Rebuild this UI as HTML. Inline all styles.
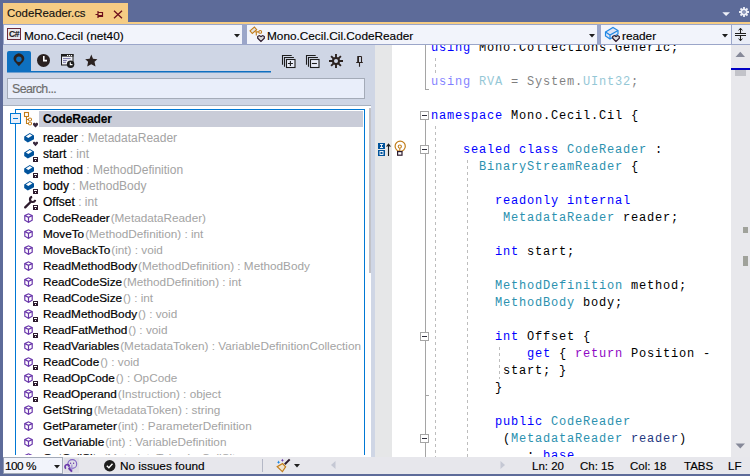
<!DOCTYPE html>
<html><head><meta charset="utf-8"><style>
*{margin:0;padding:0;box-sizing:border-box}
html,body{width:750px;height:476px;overflow:hidden;background:#5d6b99;font-family:"Liberation Sans",sans-serif}
.a{position:absolute}
svg{position:absolute;overflow:visible}
.code{position:absolute;left:431px;font-family:"Liberation Mono",monospace;font-size:12px;letter-spacing:0.8px;line-height:17px;white-space:pre;color:#000;height:17px}
.k{color:#0000ff}.t{color:#2b91af}.c{color:#8f08c4}.p{color:#1f377f}
.row{position:absolute;left:43px;height:16px;font-size:12px;white-space:pre;color:#000;-webkit-text-stroke:0.2px #000;line-height:16px}
.g{color:#a3a3a3;-webkit-text-stroke:0}
.fd{opacity:.5}
.txt{position:absolute;font-size:12px;white-space:pre;color:#000;line-height:14px;-webkit-text-stroke:0.15px currentColor}
.dash{position:absolute;width:1px;background:repeating-linear-gradient(to bottom,#bdbdbd 0 3px,transparent 3px 6px)}
.obox{position:absolute;left:420px;width:9px;height:9px;border:1px solid #a5a5a5;background:#fff}
.obox:after{content:"";position:absolute;left:1px;top:3px;width:5px;height:1px;background:#2d2d3a}
.oline{position:absolute;left:425px;width:1px;background:#a5a5a5}
</style></head><body>
<div class="a" style="left:3px;top:3px;width:125px;height:21px;background:#f5cc84"></div>
<div class="a" style="left:3px;top:22px;width:747px;height:2px;background:#f5cc84"></div>
<div class="txt" style="left:7px;top:6px;font-size:11.4px;color:#111">CodeReader.cs</div>
<svg style="left:95px;top:10px" width="9" height="9"><path d="M0.5 4.5 H3 M3 1 V8 M3 2.5 H7.5 V6.5 H3" stroke="#6d0f1b" stroke-width="1.2" fill="none"/><rect x="3" y="5" width="4.5" height="1.6" fill="#6d0f1b"/></svg>
<svg style="left:113px;top:10px" width="10" height="9"><path d="M1 0.8 L9 8.2 M9 0.8 L1 8.2" stroke="#6d0f1b" stroke-width="1.3"/></svg>
<svg style="left:722px;top:12px" width="9" height="5"><path d="M0.3 0.3 H8 L4.1 4 Z" fill="#eef0f8"/></svg>
<svg style="left:739px;top:7px" width="11" height="11"><g stroke="#eef0f8" stroke-width="1.8"><path d="M5 0 V10 M0 5 H10 M1.5 1.5 L8.5 8.5 M8.5 1.5 L1.5 8.5"/></g><circle cx="5" cy="5" r="3.5" fill="#eef0f8"/><circle cx="5" cy="5" r="1.8" fill="#5d6b99"/><circle cx="5" cy="5" r="0.8" fill="#cdd2e6"/></svg>
<div class="a" style="left:3px;top:24px;width:747px;height:21px;background:#9ba6c9"></div>
<div class="a" style="left:4px;top:25px;width:238px;height:19px;background:#f2f4fb"></div>
<div class="txt" style="left:24px;top:29px;font-size:11.8px">Mono.Cecil (net40)</div>
<svg style="left:234px;top:34px" width="7" height="4"><path d="M0 0 H6 L3 3.5 Z" fill="#1e1e1e"/></svg>
<div class="a" style="left:247px;top:25px;width:350px;height:19px;background:#f2f4fb"></div>
<div class="txt" style="left:267px;top:29px;font-size:11.8px">Mono.Cecil.Cil.CodeReader</div>
<svg style="left:589px;top:34px" width="7" height="4"><path d="M0 0 H6 L3 3.5 Z" fill="#1e1e1e"/></svg>
<div class="a" style="left:601px;top:25px;width:130px;height:19px;background:#f2f4fb"></div>
<div class="txt" style="left:622px;top:29px;font-size:11.8px">reader</div>
<svg style="left:722px;top:34px" width="7" height="4"><path d="M0 0 H6 L3 3.5 Z" fill="#1e1e1e"/></svg>
<div class="a" style="left:7px;top:28px;width:14px;height:12px;border:1px solid #6d2a3a;background:#e8e8ec"></div>
<div class="txt" style="left:9px;top:28px;font-size:8.5px;font-weight:bold;color:#1e1e1e;line-height:12px;letter-spacing:-0.3px">C#</div>
<svg style="left:249px;top:26px" width="18" height="17"><g fill="none" stroke="#c27d1a" stroke-width="1.1"><path d="M1 4.9 L5.4 1 L7.7 3.6 L3.3 7.5 Z" fill="#e2e2e2"/><path d="M6.3 5.9 H9.8 M7.3 5.4 V9.6"/><circle cx="11.2" cy="5.9" r="1.4"/></g><path d="M12 15.5 L8.7 12.3 V10.6 L10.2 9.6 L12 10.6 L13.8 9.6 L15.3 10.6 V12.3 Z" fill="#dedede" stroke="#2d1b2e" stroke-width="1.2"/></svg>
<svg style="left:604px;top:26px" width="18" height="17"><path d="M1.5 6 L9 1.5 L14 4.5 V8 L6 13 L1.5 10 Z" fill="#dde3f5" stroke="#1e88e5" stroke-width="1.2"/><path d="M1.5 6 L6 9 L14 4.5 M6 9 V13" fill="none" stroke="#1e88e5" stroke-width="1.2"/><path d="M12 15.5 L8.7 12.3 V10.6 L10.2 9.6 L12 10.6 L13.8 9.6 L15.3 10.6 V12.3 Z" fill="#dedede" stroke="#2d1b2e" stroke-width="1.2"/></svg>
<div class="a" style="left:732px;top:25px;width:18px;height:19px;background:#e9edf7"></div>
<svg style="left:734px;top:27px" width="14" height="16"><path d="M1 6.5 H12 M1 8.5 H12 M6.5 1.5 V6.5 M6.5 8.5 V13.5" stroke="#1e1e1e" stroke-width="1.1"/><path d="M4.6 3.4 L6.5 1.2 L8.4 3.4 M4.6 11.6 L6.5 13.8 L8.4 11.6" stroke="#1e1e1e" stroke-width="1" fill="none"/></svg>
<div class="a" style="left:3px;top:45px;width:372px;height:412px;background:#cfd6e5"></div>
<div class="a" style="left:7px;top:51px;width:24px;height:21px;background:#0e70c0;border-radius:2px 2px 0 0"></div>
<div class="a" style="left:7px;top:71px;width:264px;height:1px;background:#0e70c0"></div>
<div class="a" style="left:7px;top:72px;width:264px;height:1px;background:#6e9fd0"></div>
<svg style="left:13px;top:54px" width="12" height="13"><path d="M5.9 12.2 L1.6 7.6 A5.2 5.2 0 1 1 10.2 7.6 Z" fill="#2b2220"/><circle cx="5.9" cy="5.2" r="2.7" fill="#0e70c0"/></svg>
<svg style="left:37px;top:54px" width="14" height="14"><circle cx="6.5" cy="6.4" r="6.5" fill="#2b2220"/><path d="M6.8 1.9 V6.6 H10" stroke="#fff" stroke-width="1.6" fill="none"/></svg>
<svg style="left:61px;top:54px" width="15" height="15"><rect x="0.5" y="0.5" width="11.5" height="10.5" fill="#eef0f6" stroke="#1e1e1e"/><rect x="0" y="0" width="12.5" height="2.6" fill="#1e1e1e"/><rect x="6" y="1" width="1.2" height="1" fill="#fff"/><rect x="7.9" y="1" width="1.2" height="1" fill="#fff"/><rect x="9.9" y="1" width="1.2" height="1" fill="#fff"/><path d="M2 4.6 H9.6 M2 6.5 H5.8 M2 8.3 H5" stroke="#7a78a8" stroke-width="1"/><circle cx="9.6" cy="10.2" r="3.7" fill="#1e1e1e"/><path d="M9.3 8.2 V10.6 H11.5" stroke="#fff" stroke-width="1.1" fill="none"/></svg>
<svg style="left:84px;top:54px" width="14" height="13"><path d="M7.3 0.4 L9 4.8 L13.4 5.2 L10.5 7.8 L11.5 12.5 L7.3 10.2 L3.2 12.5 L4.1 7.8 L1.2 5.2 L5.6 4.8 Z" fill="#2b2220"/></svg>
<svg style="left:281px;top:54px" width="15" height="15"><path d="M1.5 10.8 V1.5 H10.7 M3.5 12.7 V3.5 H12.9" stroke="#1e1e1e" stroke-width="1.1" fill="none"/><rect x="5.5" y="5.5" width="8.5" height="8" fill="#e8ecf7" stroke="#1e1e1e" stroke-width="1.1"/><path d="M9.4 7 V12 M6.9 9.5 H11.9" stroke="#1e1e1e" stroke-width="1.1"/></svg>
<svg style="left:305px;top:54px" width="15" height="15"><path d="M1.5 10.8 V1.5 H10.7 M3.5 12.7 V3.5 H12.9" stroke="#1e1e1e" stroke-width="1.1" fill="none"/><rect x="5.5" y="5.5" width="8.5" height="8" fill="#e8ecf7" stroke="#1e1e1e" stroke-width="1.1"/><path d="M6.9 9.5 H11.9" stroke="#1e1e1e" stroke-width="1.1"/></svg>
<svg style="left:329px;top:54px" width="14" height="14"><g stroke="#2b2220" stroke-width="1.9"><path d="M7 0 V14 M0 7 H14 M2.1 2.1 L11.9 11.9 M11.9 2.1 L2.1 11.9"/></g><circle cx="7" cy="7" r="4" fill="#2b2220"/><circle cx="7" cy="7" r="2" fill="#cfd6e5"/></svg>
<svg style="left:356px;top:56px" width="8" height="11"><path d="M1.5 0.5 H5.5 M5.5 0.5 V6.5 M0.2 6.5 H6.8 M3.5 6.5 V10.8" stroke="#2b2220" stroke-width="1.1" fill="none"/><rect x="1.2" y="0.5" width="1.8" height="6" fill="#2b2220"/></svg>
<div class="a" style="left:7px;top:78px;width:358px;height:21px;background:#e9eefa;border:1px solid #a4abb8"></div>
<div class="txt" style="left:12px;top:82px;font-size:12.4px;letter-spacing:-0.6px;color:#6d6d6d">Search...</div>
<div class="a" style="left:3px;top:105px;width:368px;height:352px;background:#fff;border-top:1px solid #a9b1bf"></div>
<div class="a" style="left:39px;top:111px;width:324px;height:16px;background:#c9ccd8"></div>
<div class="a" style="left:15px;top:109px;width:350px;height:346px;border:1px solid #0078d4;border-bottom:none"></div>
<div class="a" style="left:369px;top:108px;width:2px;height:165px;background:#c2c3c9"></div>
<div class="a" style="left:10px;top:113px;width:11px;height:11px;background:#e9f0fb;border:1px solid #0078d4"></div>
<div class="a" style="left:13px;top:118px;width:5px;height:1px;background:#0078d4"></div>
<svg style="left:23px;top:111px" width="16" height="17"><g fill="none" stroke="#c27d1a" stroke-width="1.1"><rect x="1.5" y="1.5" width="4" height="4"/><path d="M3.5 5.5 V12.5 H5.5 M3.5 8.5 H5.5"/></g><g fill="none" stroke="#c27d1a" stroke-width="1"><rect x="5.5" y="7.2" width="3" height="2.6" rx="0.6"/><rect x="5.5" y="11.2" width="3" height="2.6" rx="0.6"/></g><path d="M12.5 16.5 L10 14 V12.4 L11.2 11.6 L12.5 12.4 L13.8 11.6 L15 12.4 V14 Z" fill="#3a2a3e"/></svg>
<div class="row" style="top:111px;font-weight:bold;-webkit-text-stroke:0.1px #000;letter-spacing:-0.2px">CodeReader</div>
<div class="a" style="left:0;top:0;width:371px;height:455px;overflow:hidden">
<div class="row" style="top:130px;font-size:12px">reader<span class="g" style="margin-left:0px"> : MetadataReader</span></div>
<svg style="left:24px;top:133px" width="16" height="15"><path d="M0.2 3.4 L5.8 0 L10 2.4 L10 6.2 L3.8 9.4 L0.2 7 Z" fill="#00539c"/><path d="M1.9 3.6 L5.8 1.1 L8.3 2.6 L4.3 5 Z" fill="#fff"/><path d="M11.5 13.2 L9 10.6 V9.3 L10.1 8.5 L11.5 9.4 L12.9 8.5 L14 9.3 V10.6 Z" fill="#3a2a3e"/></svg>
<div class="row" style="top:146px;font-size:12px">start<span class="g" style="margin-left:0px"> : int</span></div>
<svg style="left:24px;top:149px" width="16" height="15"><path d="M0.2 3.4 L5.8 0 L10 2.4 L10 6.2 L3.8 9.4 L0.2 7 Z" fill="#00539c"/><path d="M1.9 3.6 L5.8 1.1 L8.3 2.6 L4.3 5 Z" fill="#fff"/><rect x="9" y="8" width="5" height="5" fill="#2d1b2e"/><rect x="10" y="9" width="3" height="1" fill="#fff"/><rect x="11" y="11" width="1" height="1" fill="#fff"/></svg>
<div class="row" style="top:162px;font-size:12px">method<span class="g" style="margin-left:0px"> : MethodDefinition</span></div>
<svg style="left:24px;top:165px" width="16" height="15"><path d="M0.2 3.4 L5.8 0 L10 2.4 L10 6.2 L3.8 9.4 L0.2 7 Z" fill="#00539c"/><path d="M1.9 3.6 L5.8 1.1 L8.3 2.6 L4.3 5 Z" fill="#fff"/><rect x="9" y="8" width="5" height="5" fill="#2d1b2e"/><rect x="10" y="9" width="3" height="1" fill="#fff"/><rect x="11" y="11" width="1" height="1" fill="#fff"/></svg>
<div class="row" style="top:178px;font-size:12px">body<span class="g" style="margin-left:0px"> : MethodBody</span></div>
<svg style="left:24px;top:181px" width="16" height="15"><path d="M0.2 3.4 L5.8 0 L10 2.4 L10 6.2 L3.8 9.4 L0.2 7 Z" fill="#00539c"/><path d="M1.9 3.6 L5.8 1.1 L8.3 2.6 L4.3 5 Z" fill="#fff"/><rect x="9" y="8" width="5" height="5" fill="#2d1b2e"/><rect x="10" y="9" width="3" height="1" fill="#fff"/><rect x="11" y="11" width="1" height="1" fill="#fff"/></svg>
<div class="row" style="top:194px;font-size:12px">Offset<span class="g" style="margin-left:0px"> : int</span></div>
<svg style="left:24px;top:197px" width="16" height="15"><path d="M1.2 10.4 L6.6 5" stroke="#2d1b2e" stroke-width="2.3" stroke-linecap="round"/><path d="M8.15 -0.16 A2.6 2.6 0 1 0 11.16 2.85" stroke="#2d1b2e" stroke-width="2.2" fill="none"/><rect x="9" y="8" width="5" height="5" fill="#2d1b2e"/><rect x="10" y="9" width="3" height="1" fill="#fff"/><rect x="11" y="11" width="1" height="1" fill="#fff"/></svg>
<div class="row" style="top:210px;font-size:11.75px">CodeReader<span class="g" style="margin-left:1px">(MetadataReader)</span></div>
<svg style="left:24px;top:213px" width="16" height="15"><g fill="none" stroke="#6936aa" stroke-width="1.2"><path d="M0.8 2.6 L4.5 0.8 L8.2 2.6 L8.2 7.2 L4.5 9.2 L0.8 7.2 Z"/><path d="M0.8 2.6 L4.5 4.4 L8.2 2.6 M4.5 4.4 L4.5 9.2"/></g></svg>
<div class="row" style="top:226px;font-size:11.75px">MoveTo<span class="g" style="margin-left:1px">(MethodDefinition) : int</span></div>
<svg style="left:24px;top:229px" width="16" height="15"><g fill="none" stroke="#6936aa" stroke-width="1.2"><path d="M0.8 2.6 L4.5 0.8 L8.2 2.6 L8.2 7.2 L4.5 9.2 L0.8 7.2 Z"/><path d="M0.8 2.6 L4.5 4.4 L8.2 2.6 M4.5 4.4 L4.5 9.2"/></g></svg>
<div class="row" style="top:242px;font-size:11.75px">MoveBackTo<span class="g" style="margin-left:1px">(int) : void</span></div>
<svg style="left:24px;top:245px" width="16" height="15"><g fill="none" stroke="#6936aa" stroke-width="1.2"><path d="M0.8 2.6 L4.5 0.8 L8.2 2.6 L8.2 7.2 L4.5 9.2 L0.8 7.2 Z"/><path d="M0.8 2.6 L4.5 4.4 L8.2 2.6 M4.5 4.4 L4.5 9.2"/></g></svg>
<div class="row" style="top:258px;font-size:11.75px">ReadMethodBody<span class="g" style="margin-left:1px">(MethodDefinition) : MethodBody</span></div>
<svg style="left:24px;top:261px" width="16" height="15"><g fill="none" stroke="#6936aa" stroke-width="1.2"><path d="M0.8 2.6 L4.5 0.8 L8.2 2.6 L8.2 7.2 L4.5 9.2 L0.8 7.2 Z"/><path d="M0.8 2.6 L4.5 4.4 L8.2 2.6 M4.5 4.4 L4.5 9.2"/></g></svg>
<div class="row" style="top:274px;font-size:11.75px">ReadCodeSize<span class="g" style="margin-left:1px">(MethodDefinition) : int</span></div>
<svg style="left:24px;top:277px" width="16" height="15"><g fill="none" stroke="#6936aa" stroke-width="1.2"><path d="M0.8 2.6 L4.5 0.8 L8.2 2.6 L8.2 7.2 L4.5 9.2 L0.8 7.2 Z"/><path d="M0.8 2.6 L4.5 4.4 L8.2 2.6 M4.5 4.4 L4.5 9.2"/></g></svg>
<div class="row" style="top:290px;font-size:11.75px">ReadCodeSize<span class="g" style="margin-left:1px">() : int</span></div>
<svg style="left:24px;top:293px" width="16" height="15"><g fill="none" stroke="#6936aa" stroke-width="1.2"><path d="M0.8 2.6 L4.5 0.8 L8.2 2.6 L8.2 7.2 L4.5 9.2 L0.8 7.2 Z"/><path d="M0.8 2.6 L4.5 4.4 L8.2 2.6 M4.5 4.4 L4.5 9.2"/></g><rect x="9" y="8" width="5" height="5" fill="#2d1b2e"/><rect x="10" y="9" width="3" height="1" fill="#fff"/><rect x="11" y="11" width="1" height="1" fill="#fff"/></svg>
<div class="row" style="top:306px;font-size:11.75px">ReadMethodBody<span class="g" style="margin-left:1px">() : void</span></div>
<svg style="left:24px;top:309px" width="16" height="15"><g fill="none" stroke="#6936aa" stroke-width="1.2"><path d="M0.8 2.6 L4.5 0.8 L8.2 2.6 L8.2 7.2 L4.5 9.2 L0.8 7.2 Z"/><path d="M0.8 2.6 L4.5 4.4 L8.2 2.6 M4.5 4.4 L4.5 9.2"/></g><rect x="9" y="8" width="5" height="5" fill="#2d1b2e"/><rect x="10" y="9" width="3" height="1" fill="#fff"/><rect x="11" y="11" width="1" height="1" fill="#fff"/></svg>
<div class="row" style="top:322px;font-size:11.75px">ReadFatMethod<span class="g" style="margin-left:1px">() : void</span></div>
<svg style="left:24px;top:325px" width="16" height="15"><g fill="none" stroke="#6936aa" stroke-width="1.2"><path d="M0.8 2.6 L4.5 0.8 L8.2 2.6 L8.2 7.2 L4.5 9.2 L0.8 7.2 Z"/><path d="M0.8 2.6 L4.5 4.4 L8.2 2.6 M4.5 4.4 L4.5 9.2"/></g><rect x="9" y="8" width="5" height="5" fill="#2d1b2e"/><rect x="10" y="9" width="3" height="1" fill="#fff"/><rect x="11" y="11" width="1" height="1" fill="#fff"/></svg>
<div class="row" style="top:338px;font-size:11.75px">ReadVariables<span class="g" style="margin-left:1px">(MetadataToken) : VariableDefinitionCollection</span></div>
<svg style="left:24px;top:341px" width="16" height="15"><g fill="none" stroke="#6936aa" stroke-width="1.2"><path d="M0.8 2.6 L4.5 0.8 L8.2 2.6 L8.2 7.2 L4.5 9.2 L0.8 7.2 Z"/><path d="M0.8 2.6 L4.5 4.4 L8.2 2.6 M4.5 4.4 L4.5 9.2"/></g></svg>
<div class="row" style="top:354px;font-size:11.75px">ReadCode<span class="g" style="margin-left:1px">() : void</span></div>
<svg style="left:24px;top:357px" width="16" height="15"><g fill="none" stroke="#6936aa" stroke-width="1.2"><path d="M0.8 2.6 L4.5 0.8 L8.2 2.6 L8.2 7.2 L4.5 9.2 L0.8 7.2 Z"/><path d="M0.8 2.6 L4.5 4.4 L8.2 2.6 M4.5 4.4 L4.5 9.2"/></g><rect x="9" y="8" width="5" height="5" fill="#2d1b2e"/><rect x="10" y="9" width="3" height="1" fill="#fff"/><rect x="11" y="11" width="1" height="1" fill="#fff"/></svg>
<div class="row" style="top:370px;font-size:11.75px">ReadOpCode<span class="g" style="margin-left:1px">() : OpCode</span></div>
<svg style="left:24px;top:373px" width="16" height="15"><g fill="none" stroke="#6936aa" stroke-width="1.2"><path d="M0.8 2.6 L4.5 0.8 L8.2 2.6 L8.2 7.2 L4.5 9.2 L0.8 7.2 Z"/><path d="M0.8 2.6 L4.5 4.4 L8.2 2.6 M4.5 4.4 L4.5 9.2"/></g><rect x="9" y="8" width="5" height="5" fill="#2d1b2e"/><rect x="10" y="9" width="3" height="1" fill="#fff"/><rect x="11" y="11" width="1" height="1" fill="#fff"/></svg>
<div class="row" style="top:386px;font-size:11.75px">ReadOperand<span class="g" style="margin-left:1px">(Instruction) : object</span></div>
<svg style="left:24px;top:389px" width="16" height="15"><g fill="none" stroke="#6936aa" stroke-width="1.2"><path d="M0.8 2.6 L4.5 0.8 L8.2 2.6 L8.2 7.2 L4.5 9.2 L0.8 7.2 Z"/><path d="M0.8 2.6 L4.5 4.4 L8.2 2.6 M4.5 4.4 L4.5 9.2"/></g><rect x="9" y="8" width="5" height="5" fill="#2d1b2e"/><rect x="10" y="9" width="3" height="1" fill="#fff"/><rect x="11" y="11" width="1" height="1" fill="#fff"/></svg>
<div class="row" style="top:402px;font-size:11.75px">GetString<span class="g" style="margin-left:1px">(MetadataToken) : string</span></div>
<svg style="left:24px;top:405px" width="16" height="15"><g fill="none" stroke="#6936aa" stroke-width="1.2"><path d="M0.8 2.6 L4.5 0.8 L8.2 2.6 L8.2 7.2 L4.5 9.2 L0.8 7.2 Z"/><path d="M0.8 2.6 L4.5 4.4 L8.2 2.6 M4.5 4.4 L4.5 9.2"/></g></svg>
<div class="row" style="top:418px;font-size:11.75px">GetParameter<span class="g" style="margin-left:1px">(int) : ParameterDefinition</span></div>
<svg style="left:24px;top:421px" width="16" height="15"><g fill="none" stroke="#6936aa" stroke-width="1.2"><path d="M0.8 2.6 L4.5 0.8 L8.2 2.6 L8.2 7.2 L4.5 9.2 L0.8 7.2 Z"/><path d="M0.8 2.6 L4.5 4.4 L8.2 2.6 M4.5 4.4 L4.5 9.2"/></g></svg>
<div class="row" style="top:434px;font-size:11.75px">GetVariable<span class="g" style="margin-left:1px">(int) : VariableDefinition</span></div>
<svg style="left:24px;top:437px" width="16" height="15"><g fill="none" stroke="#6936aa" stroke-width="1.2"><path d="M0.8 2.6 L4.5 0.8 L8.2 2.6 L8.2 7.2 L4.5 9.2 L0.8 7.2 Z"/><path d="M0.8 2.6 L4.5 4.4 L8.2 2.6 M4.5 4.4 L4.5 9.2"/></g></svg>
<div class="row" style="top:450px;font-size:11.75px">GetCallSite<span class="g" style="margin-left:1px">(MetadataToken) : CallSite</span></div>
<svg style="left:24px;top:453px" width="16" height="15"><g fill="none" stroke="#6936aa" stroke-width="1.2"><path d="M0.8 2.6 L4.5 0.8 L8.2 2.6 L8.2 7.2 L4.5 9.2 L0.8 7.2 Z"/><path d="M0.8 2.6 L4.5 4.4 L8.2 2.6 M4.5 4.4 L4.5 9.2"/></g></svg>
</div>
<div class="a" style="left:375px;top:45px;width:17px;height:412px;background:#e6e7e8"></div>
<div class="a" style="left:392px;top:45px;width:339px;height:412px;background:#fff;overflow:hidden"><div class="a" style="left:-392px;top:-45px;width:750px;height:476px">
<div class="code" style="top:40px"><span class="k">using</span> Mono.Collections.Generic;</div>
<div class="code fd" style="top:74px"><span class="k">using</span> <span class="t">RVA</span> = System.<span class="t">UInt32</span>;</div>
<div class="code" style="top:108px"><span class="k">namespace</span> Mono.Cecil.Cil {</div>
<div class="code" style="top:142px">    <span class="k">sealed</span> <span class="k">class</span> <span class="t">CodeReader</span> :</div>
<div class="code" style="top:159px">      <span class="t">BinaryStreamReader</span> {</div>
<div class="code" style="top:193px">        <span class="k">readonly</span> <span class="k">internal</span></div>
<div class="code" style="top:210px">         <span class="t">MetadataReader</span> reader;</div>
<div class="code" style="top:244px">        <span class="k">int</span> start;</div>
<div class="code" style="top:278px">        <span class="t">MethodDefinition</span> method;</div>
<div class="code" style="top:295px">        <span class="t">MethodBody</span> body;</div>
<div class="code" style="top:329px">        <span class="k">int</span> Offset {</div>
<div class="code" style="top:346px">            <span class="k">get</span> { <span class="c">return</span> Position -</div>
<div class="code" style="top:363px">         start; }</div>
<div class="code" style="top:380px">        }</div>
<div class="code" style="top:414px">        <span class="k">public</span> <span class="t">CodeReader</span></div>
<div class="code" style="top:431px">         (<span class="t">MetadataReader</span> <span class="p">reader</span>)</div>
<div class="code" style="top:448px">            : <span class="k">base</span></div>
<div class="dash" style="left:435px;top:58px;height:15px"></div>
<div class="dash" style="left:435px;top:126px;height:331px"></div>
<div class="dash" style="left:467px;top:160px;height:297px"></div>
<div class="dash" style="left:499px;top:347px;height:32px"></div>
<div class="oline" style="top:45px;height:45px"></div><div class="a" style="left:425px;top:89px;width:4px;height:1px;background:#a5a5a5"></div>
<div class="obox" style="top:111px"></div>
<div class="obox" style="top:145px"></div>
<div class="obox" style="top:332px"></div>
<div class="obox" style="top:434px"></div>
<div class="oline" style="top:120px;height:25px"></div>
<div class="oline" style="top:154px;height:178px"></div>
<div class="oline" style="top:341px;height:93px"></div>
<div class="oline" style="top:443px;height:14px"></div>
<div class="a" style="left:425px;top:395px;width:4px;height:1px;background:#a5a5a5"></div>
</div></div>
<svg style="left:378px;top:143px" width="14" height="14"><rect x="0" y="0" width="7" height="6" fill="#00539c"/><rect x="0" y="7" width="7" height="6" fill="#00539c"/><path d="M2 1.5 H5 M3.5 1.5 V4.5 M2 4.5 H5" stroke="#fff" stroke-width="0.9"/><rect x="2" y="8.5" width="3" height="3" fill="none" stroke="#fff" stroke-width="0.9"/><path d="M10.5 13 V1.5 M8.6 3.6 L10.5 1.2 L12.4 3.6" stroke="#1e1e1e" stroke-width="1.1" fill="none"/></svg>
<svg style="left:394px;top:141px" width="13" height="16"><circle cx="6.2" cy="5.3" r="5.1" fill="none" stroke="#c27d1a" stroke-width="1.2"/><circle cx="5.8" cy="5.6" r="1.6" fill="none" stroke="#c27d1a" stroke-width="1.1"/><path d="M5.8 7.2 V10.5" stroke="#c27d1a" stroke-width="1.1"/><rect x="3.6" y="10.6" width="4.4" height="3.6" fill="#fff" stroke="#2d1b2e" stroke-width="1.2"/></svg>
<div class="a" style="left:731px;top:45px;width:19px;height:412px;background:#e8e8ec"></div>
<svg style="left:735px;top:51px" width="11" height="7"><path d="M0.5 6 L5.3 0.8 L10 6 Z" fill="#868999"/></svg>
<div class="a" style="left:731px;top:68px;width:19px;height:2px;background:#0000c4"></div>
<div class="a" style="left:735px;top:70px;width:11px;height:6px;background:#c2c3c9"></div>
<div class="a" style="left:743px;top:227px;width:5px;height:6px;background:#a0a29b"></div>
<div class="a" style="left:743px;top:256px;width:5px;height:10px;background:#a0a29b"></div>
<svg style="left:735px;top:443px" width="11" height="7"><path d="M0.5 0.5 L5.3 5.5 L10 0.5 Z" fill="#868999"/></svg>
<div class="a" style="left:3px;top:457px;width:747px;height:17px;background:#e7e7ec"></div>
<div class="a" style="left:3px;top:457px;width:60px;height:17px;background:#f2f4fb;border:1px solid #a4abb8;border-left-color:#8f99b3"></div>
<div class="txt" style="left:5px;top:459px;font-size:11.8px;letter-spacing:-0.5px">100 %</div>
<svg style="left:54px;top:465px" width="7" height="4"><path d="M0 0 H6 L3 3.5 Z" fill="#1e1e1e"/></svg>
<div class="a" style="left:64px;top:458px;width:15px;height:15px;background:#dedde6"></div>
<svg style="left:64px;top:458px" width="15" height="15"><circle cx="8.3" cy="6" r="4.4" fill="none" stroke="#8165c4" stroke-width="1.1"/><path d="M7.8 6.5 V12" stroke="#a89ad6" stroke-width="1.4"/><circle cx="6.6" cy="5.2" r="0.7" fill="#6936aa"/><circle cx="9.6" cy="5.2" r="0.7" fill="#6936aa"/><path d="M4.6 10 L8 13.6" stroke="#6936aa" stroke-width="2"/><path d="M5.4 8.6 A2.2 2.2 0 1 0 2 10.6" stroke="#6936aa" stroke-width="1.7" fill="none"/></svg>
<svg style="left:104px;top:460px" width="12" height="12"><circle cx="5.7" cy="5.7" r="5.7" fill="#1e1e1e"/><path d="M2.8 5.8 L4.9 7.8 L8.5 3.8" stroke="#fff" stroke-width="1.4" fill="none"/></svg>
<div class="txt" style="left:120px;top:459px;font-size:11.8px">No issues found</div>
<div class="a" style="left:262px;top:459px;width:1px;height:13px;background:#b4b8c6"></div>
<svg style="left:276px;top:458px" width="16" height="15"><path d="M13.7 1.4 L8.8 6.3" stroke="#2d1b2e" stroke-width="2"/><path d="M6.6 5.6 L1.2 8.7 L6.4 13.6 L9.6 8.9 Z" fill="#efe3d0" stroke="#c27d1a" stroke-width="1.2"/><path d="M2.6 2.6 L3.2 3.8 L4.3 4.3 L3.2 4.8 L2.6 6 L2 4.8 L0.9 4.3 L2 3.8 Z" fill="#1e88e5"/><path d="M6.4 0.7 L6.9 1.8 L8 2.3 L6.9 2.8 L6.4 3.9 L5.9 2.8 L4.8 2.3 L5.9 1.8 Z" fill="#6936aa"/></svg>
<svg style="left:294px;top:464px" width="7" height="4"><path d="M0 0 H6 L3 3.5 Z" fill="#1e1e1e"/></svg>
<svg style="left:331px;top:461px" width="5" height="8"><path d="M4.5 0 V8 L0 4 Z" fill="#c5c8d4"/></svg>
<svg style="left:500px;top:461px" width="5" height="8"><path d="M0.5 0 V8 L5 4 Z" fill="#c5c8d4"/></svg>
<div class="txt" style="left:532px;top:459px;font-size:11.5px">Ln: 20</div>
<div class="txt" style="left:580px;top:459px;font-size:11.5px">Ch: 15</div>
<div class="txt" style="left:630px;top:459px;font-size:11.5px">Col: 18</div>
<div class="txt" style="left:684px;top:459px;font-size:11.5px">TABS</div>
<div class="txt" style="left:728px;top:459px;font-size:11.5px">LF</div>
<div class="a" style="left:0;top:474px;width:750px;height:2px;background:#5d6b99"></div>
</body></html>
